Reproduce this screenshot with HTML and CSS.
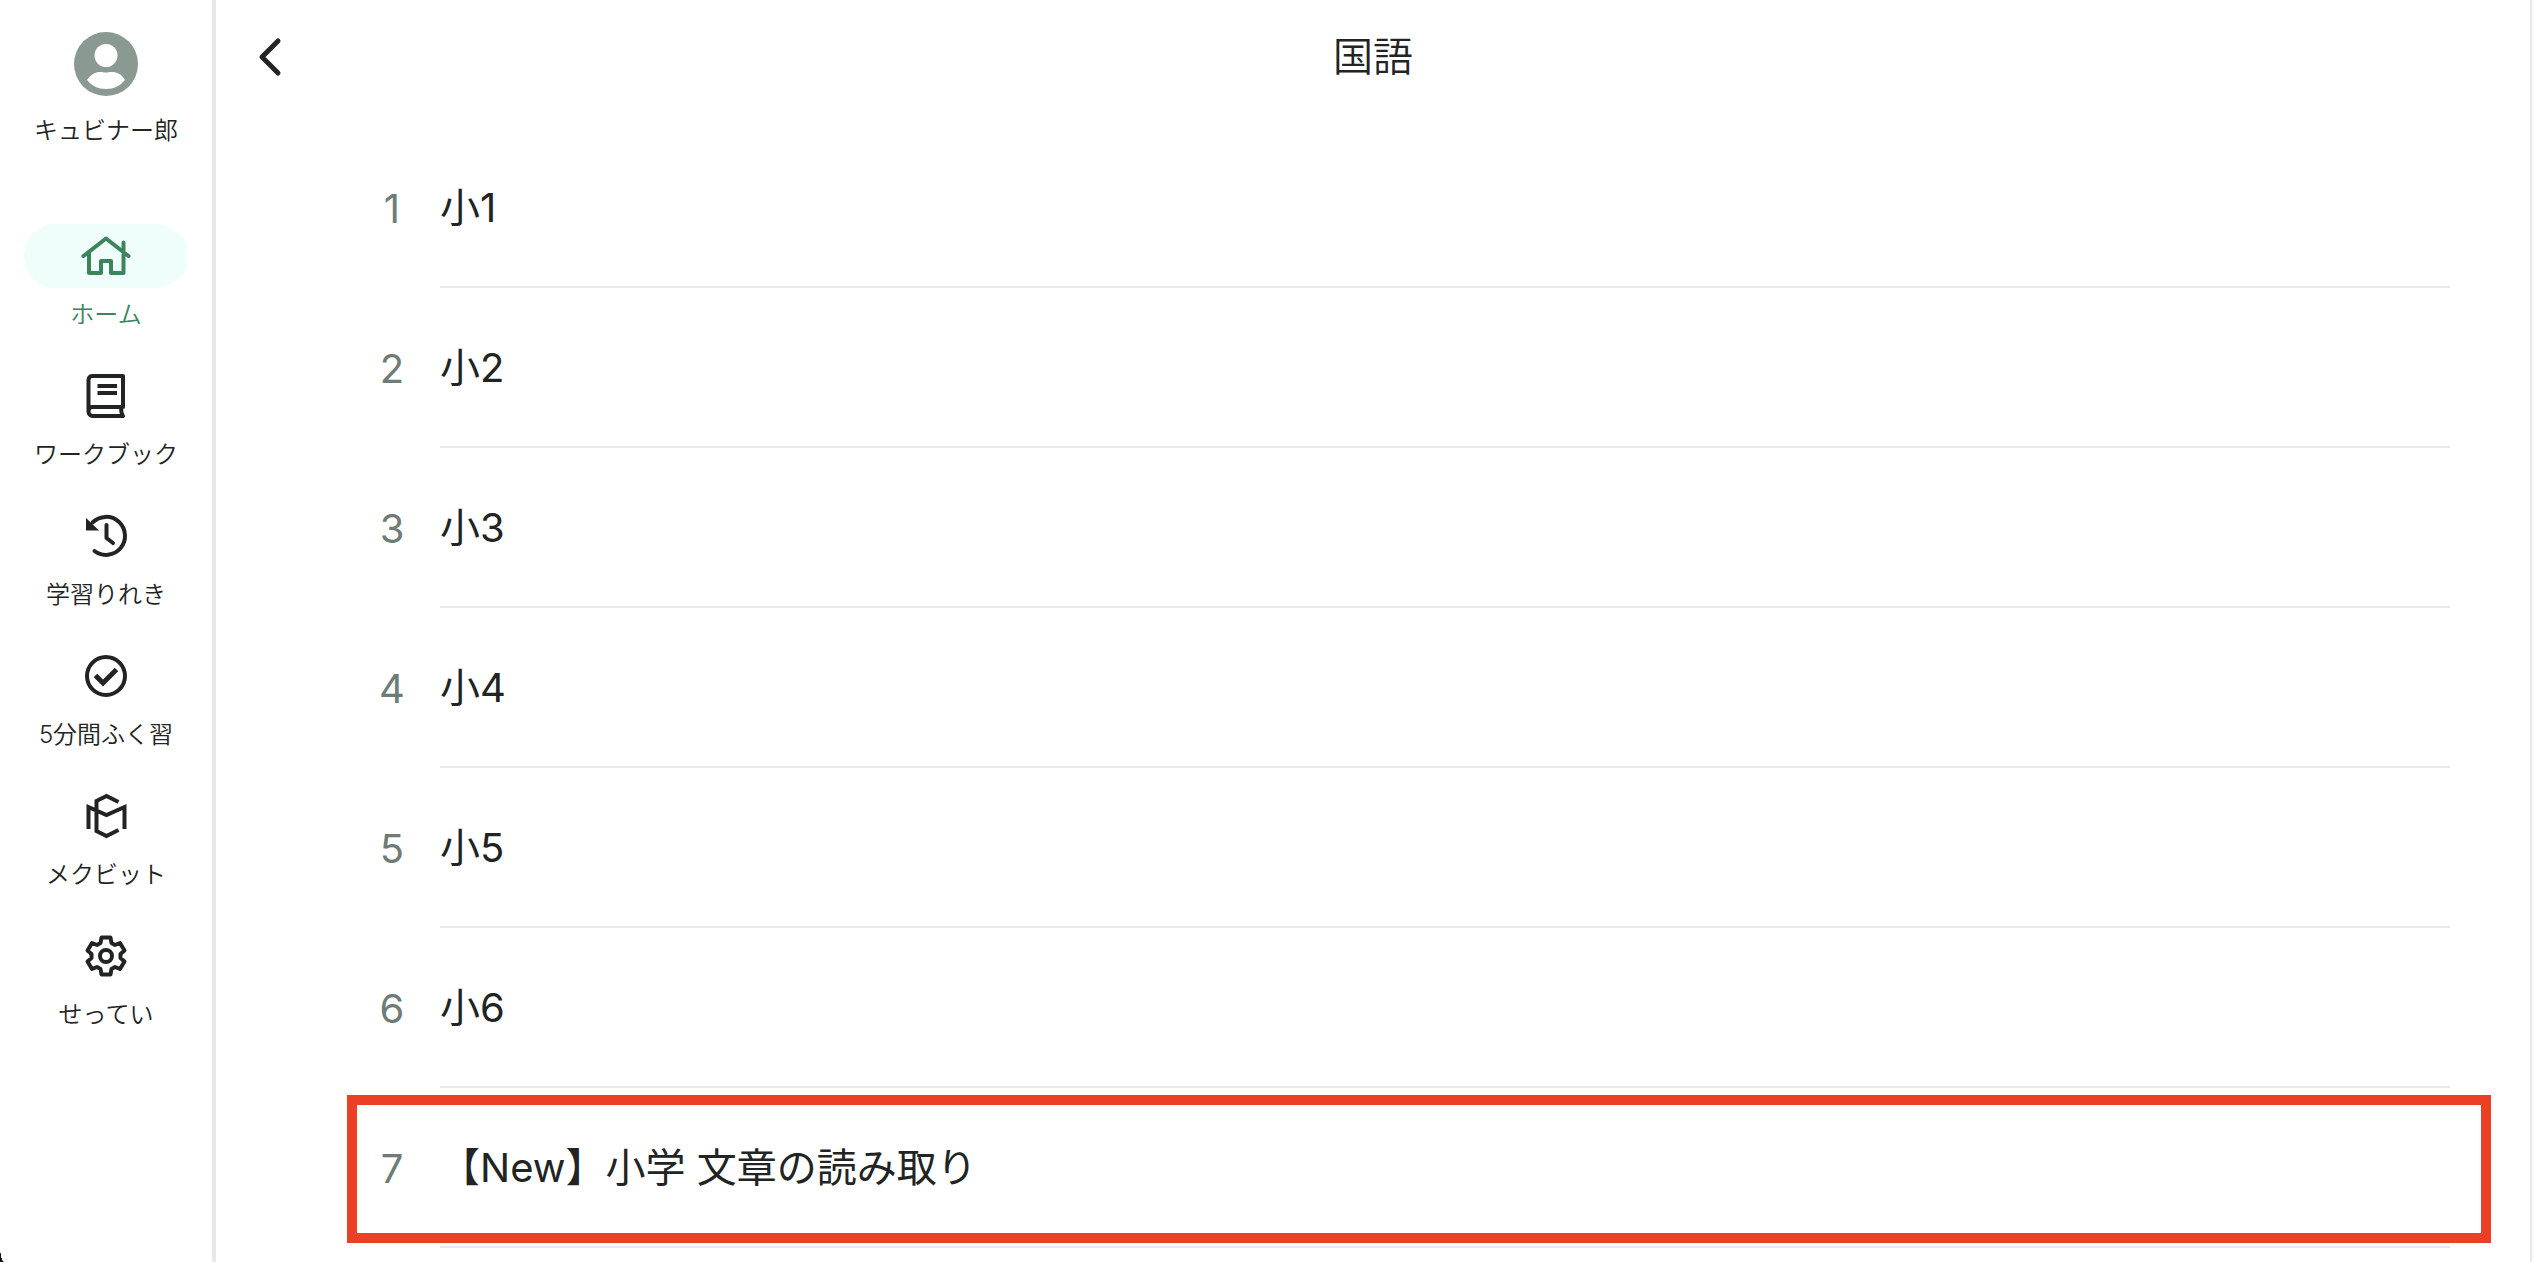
FILE: index.html
```html
<!DOCTYPE html>
<html lang="ja">
<head>
<meta charset="utf-8">
<meta name="viewport" content="width=device-width, initial-scale=1">
<title>国語</title>
<link rel="stylesheet" href="styles.css">
</head>
<body>
<div class="app">
  <aside class="sidebar">
    <a class="profile" href="#profile">
      <svg class="avatar" viewBox="0 0 64 64" aria-hidden="true">
        <circle cx="32" cy="32" r="32" fill="#8b9993"/>
        <circle cx="32" cy="23.5" r="11.5" fill="#fff"/>
        <path d="M13 48C17 42 22 39.5 28 40Q32 41 36 40C42 39.500 48 42 51 48C46 54 40 57 32 57S18 54 13 48Z" fill="#fff"/>
      </svg>
      <span class="label">キュビナー郎</span>
    </a>
    <nav class="nav">
      <a class="nav-item nav-item-active" href="#home" aria-current="page">
        <span class="pill"><svg class="icon" viewBox="0 0 64 64" aria-hidden="true">
          <path d="M9.500 32L32 14.500L54.500 32M15 28V49H27V37H37V49H49.500V18.500"/>
        </svg></span>
        <span class="label">ホーム</span>
      </a>
      <a class="nav-item" href="#workbook">
        <span class="pill"><svg class="icon" viewBox="0 0 64 64" aria-hidden="true">
          <path d="M18 12H49V43H18C15 43 14.500 45 14.500 47.500C14.500 50 16 52 19 52H49M14.500 47V16C14.500 13.500 16 12 18 12M48 43Q46 47 49 52"/>
          <path class="flat" d="M23.500 22H43M23.500 29H43"/>
        </svg></span>
        <span class="label">ワークブック</span>
      </a>
      <a class="nav-item" href="#history">
        <span class="pill"><svg class="icon" viewBox="0 0 64 64" aria-hidden="true">
          <path d="M18.500 18.500A19 19 0 1 1 20.500 47" />
          <path d="M32.500 21V34L39 39"/>
          <path class="solid" d="M12 14V26.500H25Z"/>
        </svg></span>
        <span class="label">学習りれき</span>
      </a>
      <a class="nav-item" href="#review">
        <span class="pill"><svg class="icon" viewBox="0 0 64 64" aria-hidden="true">
          <circle cx="32" cy="32" r="19"/>
          <path class="flat" d="M21.500 31.500L29 39L42.500 25.500" stroke-width="5"/>
        </svg></span>
        <span class="label">5分間ふく習</span>
      </a>
      <a class="nav-item" href="#mekubit">
        <span class="pill"><svg class="icon" viewBox="0 0 64 64" aria-hidden="true">
          <path class="flat" d="M44.500 18L32.500 12L22.500 17V47L32.500 52L44.500 46M14.500 45V23L32.500 31L50.500 23V45"/>
        </svg></span>
        <span class="label">メクビット</span>
      </a>
      <a class="nav-item" href="#settings">
        <span class="pill"><svg class="icon" viewBox="0 0 64 64" aria-hidden="true">
          <circle cx="32" cy="32" r="6"/>
          <path d="M27.500 13.500H36.500L37.500 19L41 21L46 19L50.500 26.500L46.500 30V34L50.500 37.500L46 45L41 43L37.500 45L36.500 50.500H27.500L26.500 45L23 43L18 45L13.500 37.500L17.500 34V30L13.500 26.500L18 19L23 21L26.500 19Z"/>
        </svg></span>
        <span class="label">せってい</span>
      </a>
    </nav>
  </aside>

  <main class="main">
    <header class="header">
      <button class="back" type="button" aria-label="戻る">
        <svg class="back-icon" viewBox="0 0 48 48" aria-hidden="true"><path d="M32 8L16 24L32 40"/></svg>
      </button>
      <h1 class="title">国語</h1>
    </header>
    <ol class="units">
      <li><a class="unit" href="#1"><span class="number">1</span><span class="name">小1</span></a></li>
      <li><a class="unit" href="#2"><span class="number">2</span><span class="name">小2</span></a></li>
      <li><a class="unit" href="#3"><span class="number">3</span><span class="name">小3</span></a></li>
      <li><a class="unit" href="#4"><span class="number">4</span><span class="name">小4</span></a></li>
      <li><a class="unit" href="#5"><span class="number">5</span><span class="name">小5</span></a></li>
      <li><a class="unit" href="#6"><span class="number">6</span><span class="name">小6</span></a></li>
      <li><a class="unit unit-marked" href="#7"><span class="number">7</span><span class="name">【New】小学 文章の読み取り</span></a></li>
    </ol>
  </main>
  <span class="window-corner"></span>
</div>
</body>
</html>
```
FILE: styles.css
```css
* {
  box-sizing: border-box;
}

body {
  margin: 0;
  background: #fafafa;
  color: #222423;
  font-family: Inter, "Noto Sans CJK JP", sans-serif;
}

a {
  color: inherit;
  text-decoration: none;
}

.app {
  position: relative;
  display: flex;
  min-height: 100vh;
  margin-right: 2px;
  border-right: 2px solid #e8e8e8;
  background: #fff;
}

.sidebar {
  flex: none;
  width: 216px;
  padding-top: 32px;
  border-right: 4px solid #e8e8e8;
}

.profile {
  display: flex;
  flex-direction: column;
  align-items: center;
  gap: 17px;
  margin-bottom: 75px;
}

.avatar {
  width: 64px;
  height: 64px;
}

.label {
  font-size: 24px;
  font-weight: 350;
  line-height: 36px;
  white-space: nowrap;
}

.nav {
  display: flex;
  flex-direction: column;
  gap: 31px;
  padding: 0 24px;
}

.nav-item {
  display: flex;
  flex-direction: column;
  align-items: center;
  gap: 9px;
}

.pill {
  display: flex;
  justify-content: center;
  align-self: stretch;
  border-radius: 32px;
}

.nav-item-active {
  color: #3b855d;
}

.nav-item-active .pill {
  background: #effefa;
}

.icon {
  width: 64px;
  height: 64px;
  fill: none;
  stroke: currentColor;
  stroke-width: 4;
  stroke-linecap: round;
  stroke-linejoin: round;
}

.icon .flat {
  stroke-linecap: butt;
  stroke-linejoin: miter;
}

.icon .solid {
  fill: currentColor;
  stroke: none;
}

.main {
  flex: 1;
  min-width: 0;
}

.header {
  display: grid;
  grid-template-columns: 1fr auto 1fr;
  align-items: center;
  height: 113px;
  margin-bottom: 15px;
  padding: 0 30px;
}

.back {
  width: 48px;
  height: 48px;
  padding: 0;
  border: 0;
  background: none;
  color: inherit;
}

.back-icon {
  display: block;
  fill: none;
  stroke: currentColor;
  stroke-width: 5;
  stroke-linecap: round;
  stroke-linejoin: round;
}

.title {
  margin: 0;
  font-size: 40px;
  font-weight: 350;
  line-height: 56px;
}

.units {
  margin: 0;
  padding: 0 39px 0 131px;
  list-style: none;
}

.unit {
  position: relative;
  display: flex;
  height: 160px;
  padding-right: 41px;
  font-size: 40px;
  line-height: 162px;
}

.number {
  width: 93px;
  padding-right: 3px;
  text-align: center;
  color: #6d7c76;
}

.name {
  flex: 1;
  border-bottom: 2px solid #e8e8e8;
  line-height: 160px;
}

/* Red frame round the newly added unit */
.unit-marked::after {
  content: "";
  position: absolute;
  inset: 7px 0 5px;
  border: 10px solid #eb4026;
}

.window-corner {
  position: absolute;
  left: 0;
  bottom: 0;
  width: 4px;
  height: 16px;
  background: radial-gradient(ellipse 4px 16px at 100% 0, transparent 96%, #0a1420);
}
```
